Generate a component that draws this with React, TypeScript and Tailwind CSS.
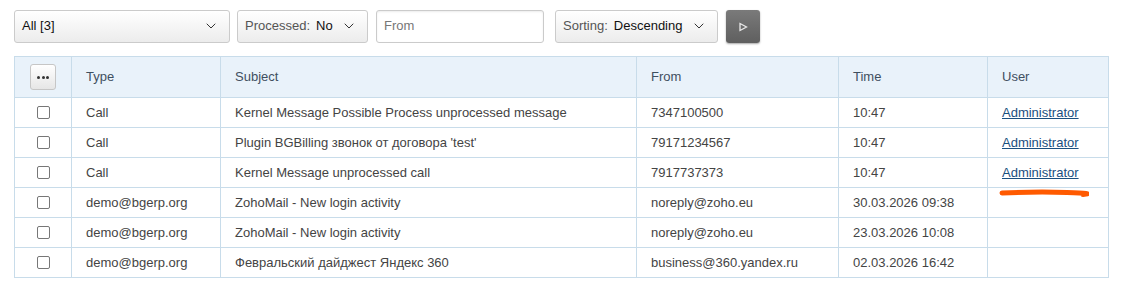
import { ChevronDown } from "lucide-react";

interface Msg {
  type: string;
  subject: string;
  from: string;
  time: string;
  user?: string;
}

const messages: Msg[] = [
  { type: "Call", subject: "Kernel Message Possible Process unprocessed message", from: "7347100500", time: "10:47", user: "Administrator" },
  { type: "Call", subject: "Plugin BGBilling звонок от договора 'test'", from: "79171234567", time: "10:47", user: "Administrator" },
  { type: "Call", subject: "Kernel Message unprocessed call", from: "7917737373", time: "10:47", user: "Administrator" },
  { type: "demo@bgerp.org", subject: "ZohoMail - New login activity", from: "noreply@zoho.eu", time: "30.03.2026 09:38" },
  { type: "demo@bgerp.org", subject: "ZohoMail - New login activity", from: "noreply@zoho.eu", time: "23.03.2026 10:08" },
  { type: "demo@bgerp.org", subject: "Февральский дайджест Яндекс 360", from: "business@360.yandex.ru", time: "02.03.2026 16:42" },
];

const Select = ({ label, value, width }: { label?: string; value: string; width: string }) => (
  <div
    className={`${width} h-[33px] flex items-center justify-between pl-[7px] pr-[10px] border border-[#cbcbcb] rounded-[3px] bg-gradient-to-b from-white to-[#ececec] text-[13px]`}
  >
    <span>
      {label && <span className="text-[#555] mr-[6px]">{label}</span>}
      <span className="text-[#111]">{value}</span>
    </span>
    <ChevronDown className="w-[16px] h-[16px] text-[#333]" strokeWidth={1.5} />
  </div>
);

export default function App() {
  return (
    <div className="w-[1121px] h-[293px] bg-white font-['Liberation_Sans',Arial,sans-serif] text-[13px] text-[#444] relative">
      <div className="flex items-center pt-[9px] pl-[14px]">
        <Select value="All [3]" width="w-[216px]" />
        <div className="w-[7px]" />
        <Select label="Processed:" value="No" width="w-[131px]" />
        <div className="w-[8px]" />
        <div className="w-[168px] h-[33px] border border-[#cbcbcb] rounded-[3px] flex items-center px-[7px] text-[#777] shadow-[inset_0_1px_2px_rgba(0,0,0,0.08)]">
          From
        </div>
        <div className="w-[11px]" />
        <Select label="Sorting:" value="Descending" width="w-[163px]" />
        <div className="w-[8px]" />
        <button className="w-[34px] h-[33px] mt-[1px] rounded-[3px] bg-gradient-to-b from-[#7a7a7a] to-[#5f5f5f] shadow-[0_1px_2px_rgba(0,0,0,0.35)] flex items-center justify-center">
          <svg width="10" height="10" viewBox="0 0 10 10">
            <path d="M2 1.5 L8.5 5 L2 8.5 Z" fill="none" stroke="#e8e8e8" strokeWidth="1.3" />
          </svg>
        </button>
      </div>

      <table className="ml-[14px] mt-[13px] w-[1094px] border-collapse table-fixed">
        <colgroup>
          <col className="w-[57px]" />
          <col className="w-[149px]" />
          <col className="w-[416px]" />
          <col className="w-[202px]" />
          <col className="w-[149px]" />
          <col className="w-[121px]" />
        </colgroup>
        <thead>
          <tr className="h-[41px] bg-[#e9f2fa] text-[#3f4f5f]">
            <th className="border border-[#c8dcea] text-center align-middle font-normal">
              <div className="mx-auto w-[26px] h-[26px] rounded-[3px] border border-[#c6c6c6] bg-gradient-to-b from-white to-[#e6e6e6] flex items-center justify-center gap-[1.5px]">
                <span className="w-[3px] h-[3px] rounded-full bg-[#333]" />
                <span className="w-[3px] h-[3px] rounded-full bg-[#333]" />
                <span className="w-[3px] h-[3px] rounded-full bg-[#333]" />
              </div>
            </th>
            {["Type", "Subject", "From", "Time", "User"].map((h) => (
              <th key={h} className="border border-[#c8dcea] text-left font-normal px-[14px]">
                {h}
              </th>
            ))}
          </tr>
        </thead>
        <tbody>
          {messages.map((m, i) => (
            <tr key={i} className="h-[30px]">
              <td className="border border-[#c8dcea] text-center">
                <div className="mx-auto w-[13px] h-[13px] rounded-[2px] border border-[#777]" />
              </td>
              <td className="border border-[#c8dcea] px-[14px]">{m.type}</td>
              <td className="border border-[#c8dcea] px-[14px]">{m.subject}</td>
              <td className="border border-[#c8dcea] px-[14px]">{m.from}</td>
              <td className="border border-[#c8dcea] px-[14px]">{m.time}</td>
              <td className="border border-[#c8dcea] px-[14px]">
                {m.user && <a className="text-[#1a4f80] underline">{m.user}</a>}
              </td>
            </tr>
          ))}
        </tbody>
      </table>

      {/* hand-drawn highlight */}
      <svg className="absolute left-[997px] top-[188px]" width="92" height="12" viewBox="0 0 92 12">
        <path d="M5 5 Q40 3.5 70 4.5 T86 6.5" fill="none" stroke="#ff5a00" strokeWidth="5" strokeLinecap="round" />
      </svg>
    </div>
  );
}
